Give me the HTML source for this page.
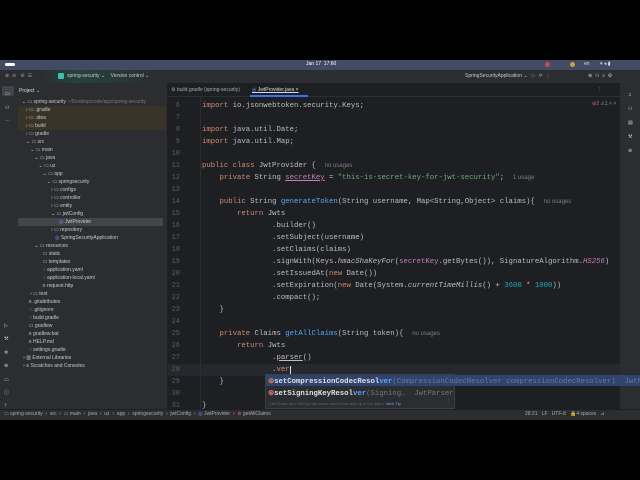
<!DOCTYPE html>
<html><head><meta charset="utf-8"><style>
*{margin:0;padding:0;box-sizing:border-box}
body{width:640px;height:480px;background:#000;position:relative;overflow:hidden;font-family:"Liberation Sans",sans-serif}
.a{position:absolute;white-space:pre}
.m{font-family:"Liberation Mono",monospace;font-size:7.3px;color:#bcbec4}
.t{font-size:5px;color:#c8c8c8}
.k{color:#cf8e6d}.f{color:#56a8f5}.s{color:#6aab73}.g{color:#7a7e85}.n{color:#2aacb8}.p{color:#c77dbb}
.ln{color:#5b5e66;font-family:"Liberation Mono",monospace;font-size:7px;text-align:right;width:20px}
.ic{position:absolute;width:6px;height:6px;border:1px solid #9da0a8;border-radius:1px}
</style></head><body>
<!-- gnome bar -->
<div class="a" style="left:0;top:60;top:60px;width:640px;height:10px;background:#434a63"></div>
<div class="a" style="left:5px;top:63px;width:10px;height:3px;background:#fff;border-radius:2px"></div>
<div class="a t" style="left:306px;top:61px;color:#fff">Jan 17  17:60</div>
<div class="a" style="left:545px;top:62px;width:5px;height:5px;border-radius:50%;background:#d04a4a"></div>
<div class="a" style="left:570px;top:62px;width:5px;height:5px;border-radius:50%;background:#c9a53a"></div>
<div class="a t" style="left:584px;top:61px;color:#ddd">en</div>
<div class="a t" style="left:600px;top:61px;color:#ddd">▾ ◂ ▮</div>
<!-- toolbar -->
<div class="a" style="left:0;top:70px;width:640px;height:13px;background:#2b2d30"></div>
<div class="a" style="left:40px;top:70px;width:120px;height:13px;background:linear-gradient(90deg,#2b2d30,#26423c 30%,#2b2d30)"></div>
<div class="a t" style="left:5px;top:73px;color:#999">⊗  ⊖   ⚙  ☰</div>
<div class="a" style="left:58px;top:73px;width:6px;height:6px;background:#3bbfae;border-radius:1px"></div>
<div class="a t" style="left:67px;top:73px">spring-security ⌄    Version control ⌄</div>
<div class="a t" style="left:465px;top:73px">SpringSecurityApplication ⌄   <span style="color:#6a6">▷  ✲</span>  ⋮</div>
<div class="a t" style="left:588px;top:73px;color:#ccc">⊛  ⚇  ⌕  ⚙</div>
<!-- left strip -->
<div class="a" style="left:0;top:83px;width:16px;height:326px;background:#2b2d30"></div>
<div class="a" style="left:2px;top:86px;width:12px;height:10px;background:#43454a;border-radius:2px"></div>
<div class="a t" style="left:5px;top:88px;color:#ddd;line-height:13.5px">▭<br>⚇<br>⋯</div>
<div class="a t" style="left:4px;top:320px;color:#ccc;line-height:13.4px">▷<br>⚒<br>✲<br>⊛<br>▭<br>ⓘ<br>ᛘ</div>
<!-- project panel -->
<div class="a" style="left:16px;top:83px;width:151px;height:326px;background:#2b2d30"></div>
<div class="a t" style="left:19px;top:88px;color:#ddd">Project ⌄</div>
<div class="a" style="left:18px;top:106px;width:148px;height:24px;background:#3a3328"></div>
<div class="a" style="left:18px;top:218px;width:145px;height:8px;background:#43454a"></div>
<div class="a t" style="left:19px;top:98px;line-height:8px">  ⌄ ▭ spring-security <span style="color:#777">~/Desktop/code/app/spring-security</span>
     › ▭ .gradle
     › ▭ .idea
     › ▭ build
     › ▭ gradle
     ⌄ ▭ src
        ⌄ ▭ main
           ⌄ ▭ java
              ⌄ ▭ uz
                 ⌄ ▭ app
                    ⌄ ▭ springsecurity
                       › ▭ configs
                       › ▭ controller
                       › ▭ entity
                       ⌄ ▭ jwtConfig
                             <span style="color:#6fa0ff">◎</span> JwtProvider
                       › ▭ repository
                          <span style="color:#6fa0ff">◎</span> SpringSecurityApplication
           ⌄ ▭ resources
                 ▭ static
                 ▭ templates
                 ◌ application.yaml
                 ◌ application-local.yaml
                 ≡ request.http
        › ▭ test
       ≡ .gitattributes
       ◌ .gitignore
       ◌ build.gradle
       ▭ gradlew
       ≡ gradlew.bat
       ≡ HELP.md
       ◌ settings.gradle
   › ▥ External Libraries
   › ≡ Scratches and Consoles</div>
<div class="a" style="left:167px;top:83px;width:1px;height:326px;background:#1e1f22"></div>
<!-- editor -->
<div class="a" style="left:168px;top:83px;width:452px;height:326px;background:#1e1f22"></div>
<div class="a" style="left:168px;top:83px;width:452px;height:14px;background:#1e1f22;border-bottom:1px solid #2b2d30"></div>
<div class="a t" style="left:171px;top:87px;color:#aaa">⚙ build.gradle (spring-security)</div>
<div class="a t" style="left:252px;top:87px;color:#ddd;text-decoration:underline"><span style="color:#6fa0ff">◎</span> JwtProvider.java ×</div>
<div class="a" style="left:250px;top:95px;width:58px;height:2px;background:#3574f0"></div>
<div class="a t" style="left:597px;top:87px;color:#999">⋮</div>
<div class="a t" style="left:592px;top:101px;color:#c77">⊘2 <span style="color:#999">⚠1 ˄ ˅</span></div>
<div class="a" style="left:168px;top:364px;width:452px;height:12px;background:#26282e"></div>
<div class="a" style="left:200px;top:97px;width:1px;height:312px;background:#2b2d30"></div>
<div class="a ln" style="left:160px;top:100px;line-height:12px">6
7
8
9
10
11
12
13
14
15
16
17
18
19
20
21
22
23
24
25
26
27
28
29
30
31</div>
<div class="a m" style="left:202px;top:99.5px;line-height:12px"><span class="k">import</span> io.jsonwebtoken.security.Keys;

<span class="k">import</span> java.util.Date;
<span class="k">import</span> java.util.Map;

<span class="k">public class</span> JwtProvider {  <span class="g" style="font-family:'Liberation Sans';font-size:6px">no usages</span>
    <span class="k">private</span> String <span class="p" style="text-decoration:underline">secretKey</span> = <span class="s">"this-is-secret-key-for-jwt-security"</span>;  <span class="g" style="font-family:'Liberation Sans';font-size:6px">1 usage</span>

    <span class="k">public</span> String <span class="f">generateToken</span>(String username, Map&lt;String,Object&gt; claims){  <span class="g" style="font-family:'Liberation Sans';font-size:6px">no usages</span>
        <span class="k">return</span> Jwts
                .builder()
                .setSubject(username)
                .setClaims(claims)
                .signWith(Keys.<i>hmacShaKeyFor</i>(<span class="p">secretKey</span>.getBytes()), SignatureAlgorithm.<i class="p">HS256</i>)
                .setIssuedAt(<span class="k">new</span> Date())
                .setExpiration(<span class="k">new</span> Date(System.<i>currentTimeMillis</i>() + <span class="n">3600</span> * <span class="n">1000</span>))
                .compact();
    }

    <span class="k">private</span> Claims <span class="f">getAllClaims</span>(String token){  <span class="g" style="font-family:'Liberation Sans';font-size:6px">no usages</span>
        <span class="k">return</span> Jwts
                .<span style="text-decoration:underline">parser</span>()
                .<span class="k">ver</span><span style="border-left:1px solid #ddd"></span>
    }

}</div>
<!-- scrollbar -->
<div class="a" style="left:622px;top:145px;width:2px;height:255px;background:#3c3e43"></div>
<!-- right strip -->
<div class="a" style="left:620px;top:83px;width:20px;height:326px;background:#2b2d30"></div>
<div class="a t" style="left:628px;top:88px;color:#ccc;line-height:14px">♫<br>⚇<br>▤<br>⚒<br>⊛</div>
<!-- completion popup -->
<div class="a" style="left:265px;top:374px;width:190px;height:35px;background:#2b2d30;border:1px solid #3c3e43"></div>
<div class="a" style="left:266px;top:375px;width:374px;height:11px;background:#2e436e"></div>
<div class="a m" style="left:268px;top:376px;line-height:12px;font-weight:bold;color:#dfe1e5"><span style="color:#c76">⊛</span>setCompressionCodecResol<span class="f">ver</span><span style="font-weight:normal;color:#6a7a9a">(CompressionCodecResolver compressionCodecResolver)  JwtParser</span>
<span style="color:#c76">⊛</span>setSigningKeyResol<span class="f">ver</span><span style="font-weight:normal;color:#777">(Signing…  JwtParser</span></div>
<div class="a" style="left:269px;top:401px;font-size:4px;color:#666">Ctrl+Down and Ctrl+Up will move caret down and up in the editor  <span style="color:#6fa0ff">Next Tip</span></div>
<div class="a t" style="left:446px;top:399px;color:#888">⋮</div>
<!-- status bar -->
<div class="a" style="left:0;top:409px;width:640px;height:11px;background:#2b2d30;border-top:1px solid #1e1f22"></div>
<div class="a t" style="left:4px;top:411px;color:#aaa">▭ spring-security  ›  src  ›  ▭ main  ›  java  ›  uz  ›  app  ›  springsecurity  ›  jwtConfig  ›  <span style="color:#6fa0ff">◎</span> JwtProvider  ›  <span style="color:#c66">⊛</span> getAllClaims</div>
<div class="a t" style="left:525px;top:411px;color:#aaa">28:21   LF   UTF-8   🔒4 spaces   ⊿</div>
</body></html>
